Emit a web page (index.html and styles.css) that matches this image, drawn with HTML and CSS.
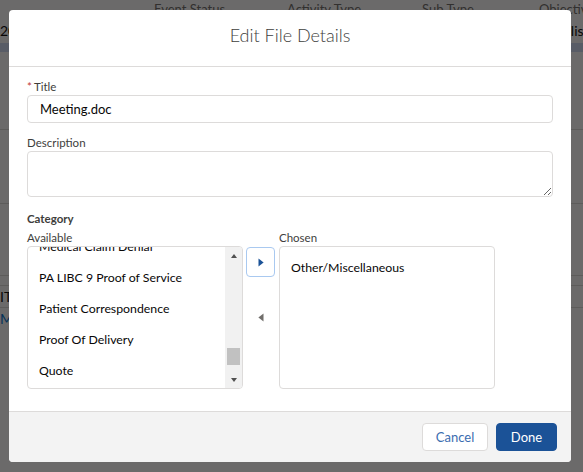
FILE: index.html
```html
<!DOCTYPE html>
<html lang="en">
<head>
<meta charset="utf-8">
<title>Edit File Details</title>
<link rel="stylesheet" href="styles.css">
</head>
<body>
<div class="page">
  <div class="page-grid page-head">
    <span></span>
    <span>Event Status</span>
    <span>Activity Type</span>
    <span>Sub Type</span>
    <span>Objective</span>
  </div>
  <div class="page-grid page-row1">
    <span class="date">2020</span>
    <span></span>
    <span></span>
    <span></span>
    <span class="obj">Establish</span>
  </div>
  <div class="page-band"></div>
  <div class="page-row r1"></div>
  <div class="page-row r2"></div>
  <div class="page-row r3"></div>
  <div class="page-row r4"></div>
  <div class="page-row r5"><span class="it">IT</span></div>
  <div class="page-row r6"><span class="me">Me</span></div>
</div>
<div class="backdrop"></div>
<section class="modal" role="dialog" aria-label="Edit File Details">
  <header class="modal-header">
    <h2 class="modal-title">Edit File Details</h2>
  </header>
  <div class="modal-body">
    <div class="field">
      <label class="label" for="title"><abbr class="req" title="required">*</abbr>Title</label>
      <input class="input" id="title" type="text" value="Meeting.doc">
    </div>
    <div class="field">
      <label class="label" for="desc">Description</label>
      <textarea class="textarea" id="desc"></textarea>
    </div>
    <div class="dueling">
      <div class="legend">Category</div>
      <div class="dl-row">
        <div class="dl-col">
          <span class="label">Available</span>
          <div class="listbox">
            <div class="lb-view">
              <ul class="lb-list avail">
                <li>Medical Claim Denial</li>
                <li>PA LIBC 9 Proof of Service</li>
                <li>Patient Correspondence</li>
                <li>Proof Of Delivery</li>
                <li>Quote</li>
              </ul>
            </div>
            <div class="sb">
              <div class="sb-btn"><span class="tri-up"></span></div>
              <div class="sb-track"><div class="sb-thumb"></div></div>
              <div class="sb-btn"><span class="tri-down"></span></div>
            </div>
          </div>
        </div>
        <div class="dl-buttons">
          <button class="mv-btn active" type="button" aria-label="Move to Chosen">
            <svg width="6" height="9" viewBox="0 0 6 9"><path d="M0.5 0.6 L5.6 4.5 L0.5 8.4 Z" fill="#1b5297"/></svg>
          </button>
          <button class="mv-btn" type="button" aria-label="Move to Available">
            <svg width="6" height="9" viewBox="0 0 6 9"><path d="M5.5 0.6 L0.4 4.5 L5.5 8.4 Z" fill="#706e6b"/></svg>
          </button>
        </div>
        <div class="dl-col">
          <span class="label">Chosen</span>
          <div class="listbox">
            <div class="lb-view">
              <ul class="lb-list chosen">
                <li>Other/Miscellaneous</li>
              </ul>
            </div>
          </div>
        </div>
      </div>
    </div>
  </div>
  <footer class="modal-footer">
    <button class="btn btn-neutral" type="button">Cancel</button>
    <button class="btn btn-brand" type="button">Done</button>
  </footer>
</section>
</body>
</html>
```

FILE: styles.css
```css
* { box-sizing: border-box; }
html, body { margin: 0; padding: 0; }
body {
  width: 583px;
  height: 472px;
  overflow: hidden;
  background: #ffffff;
  font-family: Lato, "Noto Sans", sans-serif;
  color: #080707;
  position: relative;
}

/* background page */
.page { width: 583px; }
.page-grid {
  display: grid;
  grid-template-columns: 154px 133px 135px 117px 1fr;
  white-space: nowrap;
  overflow: hidden;
}
.page-head { height: 16px; font-size: 13px; line-height: 18px; color: #706e6b; }
.page-row1 { height: 27px; font-size: 14px; line-height: 20px; padding-top: 5px; color: #080707; }
.obj { margin-left: -2px; }
.page-band { height: 9px; background: #d0dcf5; }
.page-row { border-bottom: 1px solid #dddbda; position: relative; font-size: 14px; }
.r1 { height: 78px; }
.r2 { height: 74px; }
.r3 { height: 72px; }
.r4 { height: 10px; }
.r5 { height: 22px; line-height: 21px; }
.r6 { height: 40px; border-bottom: none; line-height: 22px; }
.it { color: #080707; }
.me { color: #0176d3; }

.backdrop {
  position: fixed;
  inset: 0;
  background: rgba(8, 7, 7, 0.6);
}

/* modal */
.modal {
  position: fixed;
  left: 9px;
  top: 10px;
  width: 562px;
  background: #ffffff;
  border-radius: 4px;
  display: flex;
  flex-direction: column;
}
.modal-header {
  height: 57px;
  border-bottom: 1px solid #dddbda;
  display: flex;
  align-items: center;
  justify-content: center;
  padding-bottom: 6px;
}
.modal-title {
  margin: 0;
  font-size: 18px;
  font-weight: 300;
  color: #3e3e3c;
  line-height: 22px;
}
.modal-body {
  padding: 11px 18px 22px;
}
.field { margin-bottom: 11px; }
.field + .field { margin-bottom: 13px; }
.label {
  display: block;
  font-size: 11.5px;
  line-height: 17px;
  color: #3e3e3c;
}
.req {
  color: #c23934;
  text-decoration: none;
  border: 0;
  margin-right: 2px;
}
.input {
  display: block;
  width: 100%;
  height: 28px;
  border: 1px solid #dddbda;
  border-radius: 4px;
  padding: 0 12px;
  font-family: inherit;
  font-size: 13px;
  color: #080707;
  background: #ffffff;
  outline: none;
}
.textarea {
  display: block;
  width: 100%;
  height: 46px;
  border: 1px solid #dddbda;
  border-radius: 4px;
  padding: 6px 12px;
  font-family: inherit;
  font-size: 13px;
  background: #ffffff;
  outline: none;
}
.legend {
  font-size: 11.5px;
  line-height: 17px;
  font-weight: 700;
  color: #3e3e3c;
  margin-bottom: 2px;
}
.dl-row {
  display: flex;
  align-items: flex-start;
}
.dl-col { width: 216px; }
.listbox {
  height: 143px;
  border: 1px solid #dddbda;
  border-radius: 4px;
  overflow: hidden;
  display: flex;
  background: #ffffff;
}
.lb-view {
  flex: 1;
  overflow: hidden;
}
.lb-list {
  list-style: none;
  margin: 0;
  padding: 0;
}
.lb-list li {
  height: 31px;
  line-height: 31px;
  padding-left: 11px;
  font-size: 12.3px;
  color: #080707;
  white-space: nowrap;
}
.lb-list.avail { margin-top: -16px; }
.lb-list.chosen { padding-top: 5px; }

/* scrollbar */
.sb {
  width: 17px;
  background: #f1f1f1;
  display: flex;
  flex-direction: column;
}
.sb-btn {
  height: 17px;
  display: flex;
  align-items: center;
  justify-content: center;
}
.sb-track { flex: 1; }
.sb-thumb {
  margin: 84px 2px 0;
  height: 17px;
  background: #c1c1c1;
}
.tri-up, .tri-down {
  width: 0;
  height: 0;
  border-left: 3.5px solid transparent;
  border-right: 3.5px solid transparent;
}
.tri-up { border-bottom: 4px solid #505050; }
.tri-down { border-top: 4px solid #505050; }

.dl-buttons {
  display: flex;
  flex-direction: column;
  gap: 25px;
  margin: 18px 4px 0 3px;
}
.mv-btn {
  width: 29px;
  height: 30px;
  border: 1px solid transparent;
  border-radius: 4px;
  background: transparent;
  padding: 0;
  display: flex;
  align-items: center;
  justify-content: center;
}
.mv-btn.active {
  border-color: #a9c9f0;
  background: #ffffff;
}

/* footer */
.modal-footer {
  height: 51px;
  border-top: 1px solid #dddbda;
  background: #f3f3f3;
  border-radius: 0 0 4px 4px;
  display: flex;
  justify-content: flex-end;
  align-items: center;
  gap: 8px;
  padding-right: 14px;
}
.btn {
  height: 28px;
  border-radius: 4px;
  font-family: inherit;
  font-size: 13px;
  padding: 0;
  border: 1px solid #dddbda;
}
.btn-neutral {
  width: 66px;
  background: #ffffff;
  color: #3a6db0;
}
.btn-brand {
  width: 61px;
  background: #1b5297;
  border-color: #1b5297;
  color: #ffffff;
}
```
